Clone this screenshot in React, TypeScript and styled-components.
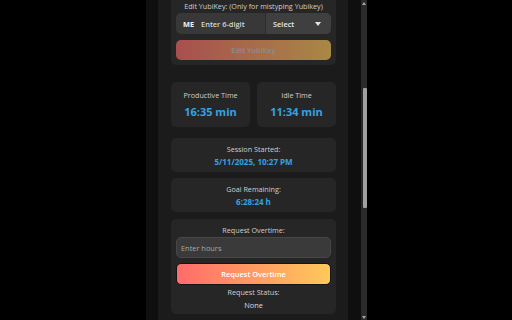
import React from "react";
import styled, { createGlobalStyle } from "styled-components";

const GlobalStyle = createGlobalStyle`
   html, body {
      margin: 0;
      padding: 0;
      background: #000;
   }
   body {
      font-family: "Open Sans", "Noto Sans", sans-serif;
      color: #d4d4d4;
   }
`;

const App = (): JSX.Element => {
   return (
      <>
         <GlobalStyle />
         <Page>
            <Popup>
               <Viewport>
                  <Panel>
                     <YubiCard>
                        <CardLabel>Edit YubiKey: (Only for mistyping Yubikey)</CardLabel>
                        <InputGroup>
                           <Prefix>ME</Prefix>
                           <CodeInput placeholder="Enter 6-digit" />
                           <FakeSelect>
                              <span>Select</span>
                              <svg width="6" height="4" viewBox="0 0 6 4">
                                 <path d="M0 0 L6 0 L3 4 Z" fill="#e6e6e6" />
                              </svg>
                           </FakeSelect>
                        </InputGroup>
                        <GradientButton disabled $height={20}>
                           Edit YubiKey
                        </GradientButton>
                     </YubiCard>

                     <StatRow>
                        <StatCard>
                           <CardLabel>Productive Time</CardLabel>
                           <StatValue>16:35 min</StatValue>
                        </StatCard>
                        <StatCard>
                           <CardLabel>Idle Time</CardLabel>
                           <StatValue>11:34 min</StatValue>
                        </StatCard>
                     </StatRow>

                     <InfoCard>
                        <CardLabel>Session Started:</CardLabel>
                        <InfoValue>5/11/2025, 10:27 PM</InfoValue>
                     </InfoCard>

                     <InfoCard>
                        <CardLabel>Goal Remaining:</CardLabel>
                        <InfoValue>6:28:24 h</InfoValue>
                     </InfoCard>

                     <RequestCard>
                        <CardLabel>Request Overtime:</CardLabel>
                        <HoursInput placeholder="Enter hours" />
                        <GradientButton $height={22}>Request Overtime</GradientButton>
                        <StatusLabel>Request Status:</StatusLabel>
                        <StatusValue>None</StatusValue>
                     </RequestCard>
                  </Panel>
               </Viewport>
               <ScrollTrack>
                  <Arrow>
                     <svg width="4" height="3" viewBox="0 0 4 3">
                        <path d="M0 3 L4 3 L2 0 Z" fill="#a8a8a8" />
                     </svg>
                  </Arrow>
                  <Thumb $top={82} $size={120} />
                  <Fill />
                  <Arrow>
                     <svg width="4" height="3" viewBox="0 0 4 3">
                        <path d="M0 0 L4 0 L2 3 Z" fill="#a8a8a8" />
                     </svg>
                  </Arrow>
               </ScrollTrack>
            </Popup>
         </Page>
      </>
   );
};

export default App;

const Page = styled.div`
   width: 512px;
   height: 320px;
   display: flex;
   justify-content: center;
   background: #000;
   overflow: hidden;
`;

const Popup = styled.div`
   display: flex;
   height: 320px;
   margin-left: 1px;
`;

const Viewport = styled.div`
   width: 215px;
   box-sizing: border-box;
   height: 320px;
   overflow: hidden;
   background: #0f0f0f;
   padding: 0 13px 0 12px;
`;

const Panel = styled.div`
   background: #1b1b1b;
   min-height: 330px;
   padding: 0 12px 0 13px;
   display: flex;
   flex-direction: column;
   gap: 6px;
`;

const Card = styled.div`
   background: #262626;
   border-radius: 5px;
   display: flex;
   flex-direction: column;
   align-items: center;
   text-align: center;
`;

const CardLabel = styled.div`
   font-size: 7.2px;
   line-height: 10px;
   color: #cfcfcf;
   white-space: nowrap;
   text-align: center;
`;

const YubiCard = styled(Card)`
   margin-top: -5px; // top of the card is scrolled out of view
   padding: 6px 5px 5px;
   align-items: stretch;
   gap: 6px;
   ${CardLabel} {
      margin-bottom: -4px;
   }
`;

const InputGroup = styled.div`
   display: flex;
   height: 21px;
   background: #383838;
   border-radius: 5px;
   overflow: hidden;
`;

const Prefix = styled.span`
   display: flex;
   align-items: center;
   padding: 0 0 0 7px;
   font-size: 7.4px;
   font-weight: 700;
   color: #f2f2f2;
`;

const CodeInput = styled.input`
   width: 60px;
   flex: 1;
   min-width: 0;
   border: none;
   outline: none;
   background: transparent;
   padding: 0 0 0 7px;
   font-family: inherit;
   font-size: 7.4px;
   font-weight: 600;
   color: #eee;
   &::placeholder {
      color: #d6d6d6;
   }
`;

const FakeSelect = styled.div`
   width: 66px;
   box-sizing: border-box;
   display: flex;
   align-items: center;
   justify-content: space-between;
   padding: 0 10px 0 7px;
   background: #3f3f3f;
   border-left: 1px solid #2c2c2c;
   font-size: 7.4px;
   font-weight: 600;
   color: #e6e6e6;
`;

const GradientButton = styled.button<{ $height: number }>`
   height: ${(p) => p.$height}px;
   width: 100%;
   border: 1px solid #151515;
   border-radius: 5px;
   background: linear-gradient(90deg, #ff6b6b 0%, #ffca5a 100%);
   background-origin: border-box;
   color: #fff;
   font-family: inherit;
   font-size: 7.4px;
   font-weight: 600;
   cursor: pointer;
   flex-shrink: 0;

   &:disabled {
      opacity: 0.6;
      color: #d0d0d0;
      border: none;
      cursor: default;
   }
`;

const StatRow = styled.div`
   display: grid;
   grid-template-columns: 1fr 1fr;
   gap: 7px;
   margin: 11px 0 5px;
`;

const StatCard = styled(Card)`
   height: 45px;
   box-sizing: border-box;
   padding: 8px 4px 0;
   ${CardLabel} {
      line-height: 11px;
   }
`;

const StatValue = styled.div`
   margin-top: 3px;
   font-size: 11px;
   line-height: 15px;
   font-weight: 700;
   color: #34a3e3;
   white-space: nowrap;
`;

const InfoCard = styled(Card)`
   height: 34px;
   box-sizing: border-box;
   padding: 6px 4px 0;
`;

const InfoValue = styled.div`
   margin-top: 2px;
   font-size: 8px;
   line-height: 12px;
   font-weight: 700;
   color: #34a3e3;
   white-space: nowrap;
`;

const RequestCard = styled(Card)`
   margin-top: 1px;
   padding: 6px 5px 4px;
   align-items: stretch;
   ${GradientButton} {
      margin-top: 5px;
   }
`;

const HoursInput = styled.input`
   margin-top: 2px;
   height: 21px;
   box-sizing: border-box;
   border: 1px solid #474747;
   border-radius: 5px;
   background: #3a3a3a;
   outline: none;
   padding: 0 4px;
   font-family: inherit;
   font-size: 7.4px;
   color: #eee;
   &::placeholder {
      color: #a9a9a9;
   }
`;

const StatusLabel = styled.div`
   margin-top: 2px;
   font-size: 7.2px;
   line-height: 10px;
   color: #cfcfcf;
`;

const StatusValue = styled.div`
   margin-top: 3px;
   font-size: 7.4px;
   line-height: 10px;
   color: #dedede;
`;

const ScrollTrack = styled.div`
   width: 6px;
   height: 320px;
   background: #2a2a2a;
   display: flex;
   flex-direction: column;
   align-items: flex-end;
`;

const Arrow = styled.div`
   width: 6px;
   height: 6px;
   display: flex;
   align-items: center;
   justify-content: center;
`;

const Thumb = styled.div<{ $top: number; $size: number }>`
   width: 4px;
   margin-top: ${(p) => p.$top}px;
   height: ${(p) => p.$size}px;
   background: #a0a0a0;
   border-radius: 1px;
`;

const Fill = styled.div`
   flex: 1;
`;
